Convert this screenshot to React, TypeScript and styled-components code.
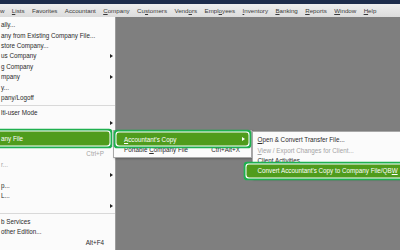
import React from "react";
import styled, { createGlobalStyle } from "styled-components";

const Global = createGlobalStyle`
  html, body { margin: 0; padding: 0; background: #7f7f7f; overflow: hidden; }
  body { font-family: "Liberation Sans", Arial, sans-serif; }
`;

const Screen = styled.div`
  width: 400px;
  height: 250px;
  display: flex;
  flex-direction: column;
  overflow: hidden;
`;

const TitleStrip = styled.div`
  flex: none;
  height: 4px;
  background: #1d2c4b;
`;

const MenuBar = styled.nav`
  flex: none;
  height: 13px;
  display: flex;
  align-items: center;
  gap: 7.4px;
  background: linear-gradient(#eeeeee, #dcdcdc);
  font-size: 6.2px;
  color: #3a3a3a;
  white-space: nowrap;
  box-sizing: border-box;
`;

const BarItem = styled.span`
  u { text-decoration-thickness: 0.6px; text-underline-offset: 1px; }
`;

const Workspace = styled.div`
  flex: 1;
  min-height: 0;
  display: flex;
  background: #7f7f7f;
  font-size: 6.3px;
`;

const FileMenu = styled.div`
  flex: none;
  width: 116px;
  box-sizing: border-box;
  background: #fbfbfb;
  border-right: 1px solid #9c9c9c;
  padding-top: 2.5px;
  display: flex;
  flex-direction: column;
`;

const SubmenuArea = styled.div`
  display: flex;
  align-items: flex-start;
  padding-top: 113px;
  margin-left: -3px;
`;

const Submenu = styled.div<{ $width: number; $top: number; $padTop: number }>`
  flex: none;
  width: ${(p) => p.$width}px;
  margin-top: ${(p) => p.$top}px;
  box-sizing: border-box;
  background: #fbfbfb;
  border: 1px solid #a8a8a8;
  padding: ${(p) => p.$padTop}px 0 2px;
  display: flex;
  flex-direction: column;
  box-shadow: 1px 1px 2px rgba(0, 0, 0, 0.25);
`;

const Row = styled.div<{ $pl: number; $ac?: number; $disabled?: boolean; $hl?: boolean; $m?: string }>`
  position: relative;
  z-index: ${(p) => (p.$hl ? 2 : 0)};
  display: grid;
  grid-template-columns: 1fr auto ${(p) => (p.$ac ?? 8)}px;
  align-items: center;
  height: 10.4px;
  flex: none;
  padding-left: ${(p) => p.$pl}px;
  margin: ${(p) => p.$m || "0"};
  white-space: nowrap;
  color: ${(p) => (p.$hl ? "#ffffff" : p.$disabled ? "#a4a4a4" : "#2a2a2a")};
  background: ${(p) => (p.$hl ? "#4f9c1c" : "transparent")};
  border-radius: 1px;
  box-shadow: ${(p) =>
    p.$hl ? "0 0 0 1.5px #4f9c1c, 0 0 0 2.5px #ffffff, 0 0 0 4.3px #1fb04f" : "none"};
  u { text-decoration-thickness: 0.6px; text-underline-offset: 1px; }
`;

const Label = styled.span`
  overflow: visible;
`;

const Shortcut = styled.span<{ $disabled?: boolean }>`
  padding-right: 3px;
  color: ${(p) => (p.$disabled ? "#a4a4a4" : "#2a2a2a")};
`;

const Arrow = styled.span<{ $light?: boolean }>`
  justify-self: center;
  width: 0;
  height: 0;
  border-left: 3px solid ${(p) => (p.$light ? "#ffffff" : "#222")};
  border-top: 2.3px solid transparent;
  border-bottom: 2.3px solid transparent;
`;

const Separator = styled.div`
  flex: none;
  height: 5px;
  display: flex;
  align-items: center;
  &::before {
    content: "";
    flex: 1;
    height: 1px;
    background: #d9d9d9;
  }
`;

type Item =
  | { sep: true }
  | { sep?: false; label?: React.ReactNode; shortcut?: string; arrow?: boolean; disabled?: boolean; hl?: boolean };

const fileItems: Item[] = [
  { label: "ally..." },
  { label: "any from Existing Company File..." },
  { label: "store Company..." },
  { label: "us Company", arrow: true },
  { label: "g Company" },
  { label: "mpany", arrow: true },
  { label: "y..." },
  { label: "pany/Logoff" },
  { sep: true },
  { label: "lti-user Mode" },
  { label: "", arrow: true },
  { sep: true },
  { label: "any File", hl: true },
  { sep: true },
  { label: "", shortcut: "Ctrl+P", disabled: true },
  { label: "r...", disabled: true },
  { label: "", arrow: true },
  { label: "p..." },
  { label: "L..." },
  { label: "", arrow: true },
  { sep: true },
  { label: "b Services" },
  { label: "other Edition..." },
  { label: "", shortcut: "Alt+F4" },
];

const menuBar: React.ReactNode[] = [
  "w",
  <><u>L</u>ists</>,
  "Favorites",
  "Accountant",
  <><u>C</u>ompany</>,
  <>Cu<u>s</u>tomers</>,
  <>Vend<u>o</u>rs</>,
  <>Empl<u>o</u>yees</>,
  <><u>I</u>nventory</>,
  <><u>B</u>anking</>,
  <><u>R</u>eports</>,
  <><u>W</u>indow</>,
  <><u>H</u>elp</>,
];

export default function App() {
  return (
    <Screen>
      <Global />
      <TitleStrip />
      <MenuBar>
        {menuBar.map((m, i) => (
          <BarItem key={i}>{m}</BarItem>
        ))}
      </MenuBar>
      <Workspace>
        <FileMenu>
          {fileItems.map((it, i) =>
            it.sep ? (
              <Separator key={i} />
            ) : (
              <Row key={i} $pl={1} $disabled={it.disabled} $hl={it.hl} $m={it.hl ? "0 7.5px 0 0" : undefined}>
                <Label>{it.label}</Label>
                <Shortcut $disabled={it.disabled}>{it.shortcut}</Shortcut>
                {it.arrow && !it.hl ? <Arrow /> : <span />}
              </Row>
            )
          )}
        </FileMenu>
        <SubmenuArea>
          <Submenu $width={139} $top={0} $padTop={3}>
            <Row $pl={6} $hl $m="0 4px 0 4px">
              <Label>
                <u>A</u>ccountant's Copy
              </Label>
              <Shortcut />
              <Arrow $light />
            </Row>
            <Row $pl={10}>
              <Label>
                Portable <u>C</u>ompany File
              </Label>
              <Shortcut>Ctrl+Alt+X</Shortcut>
              <span />
            </Row>
          </Submenu>
          <Submenu $width={152} $top={1} $padTop={2.5}>
            <Row $pl={4.5} $ac={0}>
              <Label>
                <u>O</u>pen &amp; Convert Transfer File...
              </Label>
              <Shortcut />
              <span />
            </Row>
            <Row $pl={4.5} $ac={0} $disabled>
              <Label>
                <u>V</u>iew / Export Changes for Client...
              </Label>
              <Shortcut />
              <span />
            </Row>
            <Row $pl={4.5} $ac={0}>
              <Label>Client Activities</Label>
              <Shortcut />
              <span />
            </Row>
            <Row $pl={9.5} $ac={0} $hl $m="0 3px 0 -5px">
              <Label>
                Convert Accountant's Copy to Company File/QB<u>W</u>
              </Label>
              <Shortcut />
              <span />
            </Row>
          </Submenu>
        </SubmenuArea>
      </Workspace>
    </Screen>
  );
}
